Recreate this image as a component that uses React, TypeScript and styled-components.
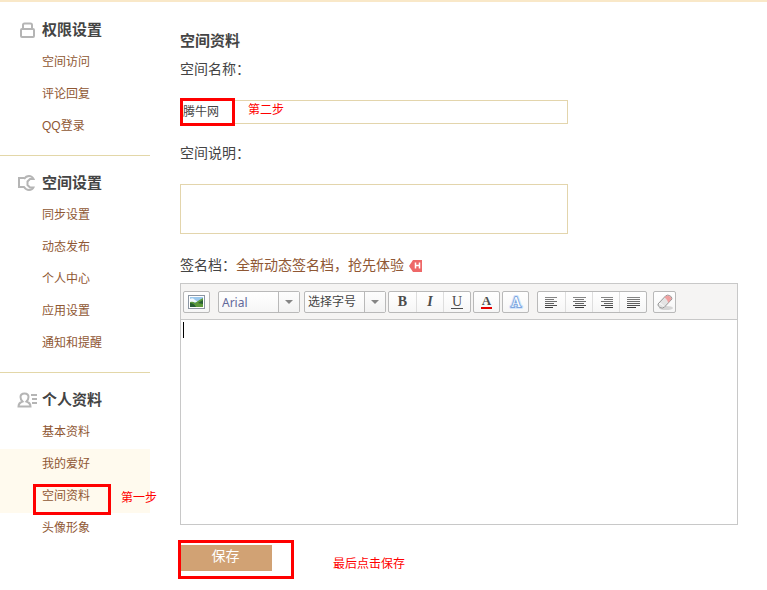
import React from "react";
import styled, { createGlobalStyle, css } from "styled-components";

const GlobalStyle = createGlobalStyle`
  *, *::before, *::after { box-sizing: border-box; }
  body {
    margin: 0;
    background: #fff;
    color: #444;
    font-family: "Liberation Sans", "Noto Sans CJK SC", sans-serif;
    font-size: 14px;
  }
  button, input, textarea, select { font-family: inherit; border-radius: 0; }
`;

const Page = styled.div`
  display: flex;
  align-items: flex-start;
  border-top: 2px solid #f9e8c8;
`;

const Sidebar = styled.nav`
  flex: 0 0 150px;
  padding-top: 1px;
`;

const Section = styled.section`
  padding-bottom: 12px;
  & + & { border-top: 1px solid #e3d7a8; }
`;

const SectionTitle = styled.h2`
  display: flex;
  align-items: center;
  gap: 5px;
  margin: 0;
  padding: 16px 0 6px 17px;
  font-size: 15px;
  line-height: 22px;
`;

const Icon = styled.svg`
  display: block;
  flex: none;
`;

const Menu = styled.ul`
  margin: 0;
  padding: 0;
  list-style: none;
`;

const MenuItem = styled.li<{ $active?: boolean }>`
  position: relative;
  height: 32px;
  padding-left: 42px;
  background: ${(p) => (p.$active ? "#fffaee" : "transparent")};
`;

const MenuLink = styled.a`
  display: block;
  color: #8f5733;
  font-size: 12px;
  line-height: 31px;
  text-decoration: none;
`;

const Mark = styled.span<{ $x: number; $y: number; $w: number; $h: number }>`
  position: absolute;
  left: ${(p) => p.$x}px;
  top: ${(p) => p.$y}px;
  width: ${(p) => p.$w}px;
  height: ${(p) => p.$h}px;
  border: 3px solid #f00;
  pointer-events: none;
`;

const Note = styled.span<{ $x: number; $y: number }>`
  position: absolute;
  left: ${(p) => p.$x}px;
  top: ${(p) => p.$y}px;
  color: #f00;
  font-size: 12px;
  line-height: 16px;
  white-space: nowrap;
  pointer-events: none;
`;

const Main = styled.main`
  flex: 1;
  min-width: 0;
  padding: 28px 29px 10px 30px;
`;

const Title = styled.h1`
  margin: 0 0 8px;
  font-size: 15px;
  line-height: 22px;
`;

const Label = styled.label`
  display: block;
  line-height: 18px;
`;

const Field = styled.div<{ $after: number }>`
  position: relative;
  max-width: 388px;
  margin: 22px 0 ${(p) => p.$after}px;
`;

const boxed = css`
  display: block;
  width: 100%;
  border: 1px solid #e3d5ac;
  background: #fff;
  color: #444;
  font-size: 12px;
  outline: none;
`;

const TextInput = styled.input`
  ${boxed}
  height: 24px;
  padding: 0 2px 4px;
`;

const TextBox = styled.textarea`
  ${boxed}
  height: 50px;
  padding: 2px;
  resize: none;
`;

const SignatureLine = styled.div`
  display: flex;
  align-items: center;
  margin-bottom: 8px;
  line-height: 20px;
`;

const SignatureLink = styled.a`
  margin-right: 5px;
  color: #8f5733;
  text-decoration: none;
`;

const Editor = styled.div`
  border: 1px solid #c8c8c8;
`;

const Toolbar = styled.div`
  display: flex;
  flex-wrap: wrap;
  min-height: 36px;
  padding: 7px 2px 6px;
  border-bottom: 1px solid #c8c8c8;
  background: #f5f4f3;
`;

const Group = styled.div<{ $after: number }>`
  display: flex;
  align-items: center;
  height: 22px;
  margin-right: ${(p) => p.$after}px;
  border: 1px solid #b9b9b9;
  border-radius: 2px;
  background: linear-gradient(#fff, #f6f6f6);
`;

const Tool = styled.button<{ $narrow?: boolean }>`
  display: flex;
  align-items: center;
  justify-content: center;
  width: 27px;
  height: 20px;
  padding: 0;
  border: 0;
  background: transparent;
  &:only-child { width: ${(p) => (p.$narrow ? 21 : 25)}px; }
  & + & { border-left: 1px solid #dedede; }
`;

const Glyph = styled.span<{ $italic?: boolean; $line?: boolean }>`
  color: #4c4c4c;
  font: ${(p) => (p.$italic ? "italic" : "normal")} bold 14px/14px "Liberation Serif", serif;
  ${(p) =>
    p.$line &&
    css`
      font-weight: normal;
      line-height: 12px;
      border-bottom: 1px solid #4c4c4c;
      padding: 0 1px;
    `}
`;

const SelectBox = styled.div<{ $after: number }>`
  position: relative;
  width: 82px;
  height: 22px;
  margin-right: ${(p) => p.$after}px;
`;

const Select = styled.select<{ $latin?: boolean }>`
  appearance: none;
  width: 100%;
  height: 22px;
  padding: 0 22px 0 3px;
  border: 1px solid #b9b9b9;
  border-radius: 2px;
  background: linear-gradient(#fff, #f6f6f6);
  color: ${(p) => (p.$latin ? "#62699a" : "#444")};
  font-family: ${(p) => (p.$latin ? '"Noto Sans", sans-serif' : "inherit")};
  font-size: 12px;
`;

const Arrow = styled.span`
  position: absolute;
  top: 1px;
  right: 1px;
  display: flex;
  align-items: center;
  justify-content: center;
  width: 21px;
  height: 20px;
  border-left: 1px solid #b9b9b9;
  background: linear-gradient(#fdfdfd, #f2f2f2);
  pointer-events: none;
`;

const Canvas = styled.div`
  position: relative;
`;

const EditArea = styled.textarea`
  display: block;
  width: 100%;
  height: 204px;
  padding: 2px;
  border: 0;
  outline: none;
  resize: none;
`;

const Caret = styled.span`
  position: absolute;
  left: 2px;
  top: 2px;
  width: 1px;
  height: 16px;
  background: #000;
`;

const Actions = styled.div`
  position: relative;
  padding: 20px 0 0 1px;
`;

const SaveButton = styled.button`
  display: block;
  width: 91px;
  height: 26px;
  padding: 0 2px 5px 0;
  border: 0;
  background: #d1a274;
  color: #fff;
  font-size: 14px;
  line-height: 20px;
`;

const LockIcon = () => (
  <Icon width="20" height="18" viewBox="0 0 20 18" fill="none" stroke="#b5b5b5" strokeWidth="2">
    <path d="M6 8V4Q6 2.500 7.500 2.500h6Q15 2.500 15 4V8" />
    <rect x="4" y="8" width="13" height="8" rx="1" />
  </Icon>
);

const WrenchIcon = () => (
  <Icon width="20" height="18" viewBox="0 0 20 18" fill="none" stroke="#b5b5b5" strokeWidth="2">
    <path d="M7 4H2v9h5q2 3 5 3 3.500 0 4.500-2.500H13L10.500 11V7.500L13 5h3.500Q15 2 12 2 9 2 7 5" />
  </Icon>
);

const PersonIcon = () => (
  <Icon width="20" height="18" viewBox="0 0 20 18" fill="none" stroke="#b5b5b5" strokeWidth="2">
    <path d="M5.500 10.500Q3.500 8.500 3.500 6 3.500 2.500 7.500 2.500T11.500 6q0 2.500-2 4.500 4 1.500 4 5h-12q0-3.500 4-5z" />
    <path d="M14 4h6M15 8h5M15 12h5" />
  </Icon>
);

const NewBadge = () => (
  <Icon width="13" height="13" viewBox="0 0 13 13">
    <path d="M4 1h9v12H4L0 7z" fill="#ee6868" />
    <path d="M6.500 3.500v6M10.500 3.500v6M6.500 6.500h4" stroke="#fff" strokeWidth="1.500" />
  </Icon>
);

const PictureIcon = () => (
  <Icon width="17" height="14" viewBox="0 0 17 14">
    <rect x=".5" y=".5" width="16" height="13" fill="#fff" stroke="#8c96a3" />
    <path d="M2 2h13v10H2z" fill="#9cc9ee" />
    <path d="M2 4q3-2 5 1l3 2H2z" fill="#f4faff" />
    <path d="M2 7q3-1 5 1 4-3 8-5v9H2z" fill="#5b993b" />
    <path d="M2 8q4 0 6 4H2zM10 8l5-3v4z" fill="#275f35" />
  </Icon>
);

const DownArrow = () => (
  <Icon width="8" height="4" viewBox="0 0 8 4">
    <path d="M0 0h8L4 4z" fill="#858585" />
  </Icon>
);

const ColorIcon = () => (
  <Icon width="13" height="16" viewBox="0 0 13 16">
    <text x="6.500" y="11" textAnchor="middle" fill="#4c4c4c" fontFamily="Liberation Serif, serif" fontWeight="bold" fontSize="13">A</text>
    <path d="M1 13h11v2H1z" fill="#e60000" />
  </Icon>
);

const GlowIcon = () => (
  <Icon width="16" height="16" viewBox="0 0 16 16">
    <text x="8" y="13" textAnchor="middle" fill="#fff" stroke="#d3e4fa" strokeWidth="4" strokeLinejoin="round" fontFamily="Liberation Serif, serif" fontSize="14">A</text>
    <text x="8" y="13" textAnchor="middle" fill="#fff" stroke="#7ca6e0" strokeWidth="2" strokeLinejoin="round" fontFamily="Liberation Serif, serif" fontSize="14">A</text>
    <text x="8" y="13" textAnchor="middle" fill="#fff" fontFamily="Liberation Serif, serif" fontSize="14">A</text>
  </Icon>
);

type Align = "left" | "center" | "right" | "justify";
const lineWidths: Record<Align, number[]> = {
  left: [12, 9, 12, 9, 12, 8],
  center: [13, 9, 13, 9, 13, 9],
  right: [12, 9, 12, 9, 12, 8],
  justify: [13, 13, 13, 13, 13, 9],
};
const lineShades = ["#858585", "#777", "#707070", "#606060", "#505050", "#3c3c3c"];

const AlignIcon = ({ kind }: { kind: Align }) => (
  <Icon width="13" height="12" viewBox="0 0 13 12">
    {lineWidths[kind].map((w, i) => {
      const x = kind === "right" ? 13 - w : kind === "center" ? (13 - w) / 2 : 0;
      return <rect key={i} x={x} y={i * 2 + 1} width={w} height="1" fill={lineShades[i]} />;
    })}
  </Icon>
);

const EraserIcon = () => (
  <Icon width="18" height="18" viewBox="0 0 18 18">
    <ellipse cx="10" cy="15" rx="7" ry="2" fill="#d5d5d5" />
    <path d="M2 11 9.500 3q1.500-1.500 4-.5T16 6L8.500 14q-2 2-4.500.5T2 11z" fill="#e4e4e4" stroke="#959595" />
    <path d="M8.500 4.500 10 3q2-1 4 .5T15.500 6L12 10q0-3-3.500-5.500z" fill="#f0a0a0" />
    <path d="M3 10.500q3 0 5 3" fill="none" stroke="#fff" />
  </Icon>
);

const sections = [
  { title: "权限设置", icon: <LockIcon />, items: ["空间访问", "评论回复", "QQ登录"] },
  { title: "空间设置", icon: <WrenchIcon />, items: ["同步设置", "动态发布", "个人中心", "应用设置", "通知和提醒"] },
  { title: "个人资料", icon: <PersonIcon />, items: ["基本资料", "我的爱好", "空间资料", "头像形象"] },
];
const highlighted = ["我的爱好", "空间资料"];
const alignments: [Align, string][] = [
  ["left", "左对齐"],
  ["center", "居中"],
  ["right", "右对齐"],
  ["justify", "两端对齐"],
];

export default function App() {
  return (
    <>
      <GlobalStyle />
      <Page>
        <Sidebar>
          {sections.map((s) => (
            <Section key={s.title}>
              <SectionTitle>{s.icon}{s.title}</SectionTitle>
              <Menu>
                {s.items.map((item) => (
                  <MenuItem key={item} $active={highlighted.includes(item)}>
                    <MenuLink href="#">{item}</MenuLink>
                    {item === "空间资料" && (
                      <>
                        <Mark $x={33} $y={3} $w={78} $h={31} />
                        <Note $x={121} $y={9}>第一步</Note>
                      </>
                    )}
                  </MenuItem>
                ))}
              </Menu>
            </Section>
          ))}
        </Sidebar>
        <Main>
          <Title>空间资料</Title>
          <Label htmlFor="space-name">空间名称：</Label>
          <Field $after={20}>
            <TextInput id="space-name" defaultValue="腾牛网" />
            <Mark $x={0} $y={-2} $w={55} $h={28} />
            <Note $x={68} $y={2}>第二步</Note>
          </Field>
          <Label htmlFor="space-desc">空间说明：</Label>
          <Field $after={21}>
            <TextBox id="space-desc" />
          </Field>
          <SignatureLine>
            <Label htmlFor="signature">签名档：</Label>
            <SignatureLink href="#">全新动态签名档，抢先体验</SignatureLink>
            <NewBadge />
          </SignatureLine>
          <Editor>
            <Toolbar>
              <Group $after={8}>
                <Tool type="button" aria-label="插入图片"><PictureIcon /></Tool>
              </Group>
              <SelectBox $after={4}>
                <Select $latin aria-label="字体"><option>Arial</option></Select>
                <Arrow><DownArrow /></Arrow>
              </SelectBox>
              <SelectBox $after={2}>
                <Select aria-label="字号"><option>选择字号</option></Select>
                <Arrow><DownArrow /></Arrow>
              </SelectBox>
              <Group $after={2}>
                <Tool type="button" aria-label="加粗"><Glyph>B</Glyph></Tool>
                <Tool type="button" aria-label="斜体"><Glyph $italic>I</Glyph></Tool>
                <Tool type="button" aria-label="下划线"><Glyph $line>U</Glyph></Tool>
              </Group>
              <Group $after={2}>
                <Tool type="button" aria-label="文字颜色"><ColorIcon /></Tool>
              </Group>
              <Group $after={8}>
                <Tool type="button" aria-label="发光字"><GlowIcon /></Tool>
              </Group>
              <Group $after={6}>
                {alignments.map(([kind, name]) => (
                  <Tool key={kind} type="button" aria-label={name}><AlignIcon kind={kind} /></Tool>
                ))}
              </Group>
              <Group $after={0}>
                <Tool $narrow type="button" aria-label="清除格式"><EraserIcon /></Tool>
              </Group>
            </Toolbar>
            <Canvas>
              <EditArea id="signature" />
              <Caret />
            </Canvas>
          </Editor>
          <Actions>
            <SaveButton type="button">保存</SaveButton>
            <Mark $x={-2} $y={15} $w={116} $h={39} />
            <Note $x={153} $y={31}>最后点击保存</Note>
          </Actions>
        </Main>
      </Page>
    </>
  );
}
